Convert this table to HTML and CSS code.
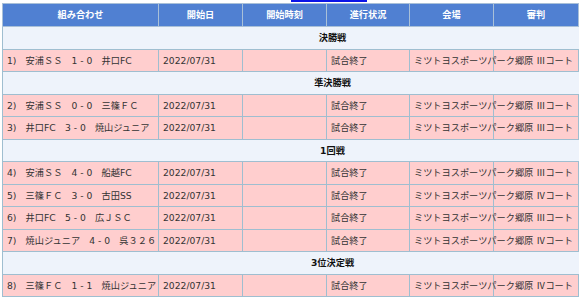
FILE: index.html
```html
<!DOCTYPE html>
<html lang="ja">
<head>
<meta charset="utf-8">
<title>試合結果</title>
<link rel="stylesheet" href="styles.css">
</head>
<body>
<div class="page">
  <div class="topline"></div>
  <table class="results">
    <colgroup>
      <col class="c-match"><col class="c-date"><col class="c-time"><col class="c-status"><col class="c-venue"><col class="c-ref"><col class="c-note">
    </colgroup>
    <thead>
      <tr><th>組み合わせ</th><th>開始日</th><th>開始時刻</th><th>進行状況</th><th>会場</th><th>審判</th><th></th></tr>
    </thead>
    <tbody>
      <tr class="round"><td colspan="7">決勝戦</td></tr>
      <tr class="game"><td>1)　安浦ＳＳ　1 - 0　井口FC</td><td>2022/07/31</td><td></td><td>試合終了</td><td>ミツトヨスポーツパーク郷原 <span class="num">Ⅲ</span>コート</td><td></td><td></td></tr>
      <tr class="round"><td colspan="7">準決勝戦</td></tr>
      <tr class="game"><td>2)　安浦ＳＳ　0 - 0　三篠ＦＣ</td><td>2022/07/31</td><td></td><td>試合終了</td><td>ミツトヨスポーツパーク郷原 <span class="num">Ⅲ</span>コート</td><td></td><td></td></tr>
      <tr class="game"><td>3)　井口FC　3 - 0　焼山ジュニア</td><td>2022/07/31</td><td></td><td>試合終了</td><td>ミツトヨスポーツパーク郷原 <span class="num">Ⅲ</span>コート</td><td></td><td></td></tr>
      <tr class="round"><td colspan="7">1回戦</td></tr>
      <tr class="game"><td>4)　安浦ＳＳ　4 - 0　船越FC</td><td>2022/07/31</td><td></td><td>試合終了</td><td>ミツトヨスポーツパーク郷原 <span class="num">Ⅲ</span>コート</td><td></td><td></td></tr>
      <tr class="game"><td>5)　三篠ＦＣ　3 - 0　古田SS</td><td>2022/07/31</td><td></td><td>試合終了</td><td>ミツトヨスポーツパーク郷原 <span class="num">Ⅳ</span>コート</td><td></td><td></td></tr>
      <tr class="game"><td>6)　井口FC　5 - 0　広ＪＳＣ</td><td>2022/07/31</td><td></td><td>試合終了</td><td>ミツトヨスポーツパーク郷原 <span class="num">Ⅲ</span>コート</td><td></td><td></td></tr>
      <tr class="game"><td>7)　焼山ジュニア　4 - 0　呉３２６</td><td>2022/07/31</td><td></td><td>試合終了</td><td>ミツトヨスポーツパーク郷原 <span class="num">Ⅳ</span>コート</td><td></td><td></td></tr>
      <tr class="round"><td colspan="7">3位決定戦</td></tr>
      <tr class="game"><td>8)　三篠ＦＣ　1 - 1　焼山ジュニア</td><td>2022/07/31</td><td></td><td>試合終了</td><td>ミツトヨスポーツパーク郷原 <span class="num">Ⅳ</span>コート</td><td></td><td></td></tr>
    </tbody>
  </table>
</div>
</body>
</html>
```

FILE: styles.css
```css
html, body {
  margin: 0;
  padding: 0;
  background: #ffffff;
}

.page {
  overflow: hidden;
  width: 579px;
  height: 299px;
  font-family: "DejaVu Sans", "Noto Sans CJK JP", sans-serif;
  font-size: 9.2px;
  color: #333333;
}

.topline {
  height: 2px;
  width: 76px;
  margin-left: 291px;
  background: #0a14e6;
}

.results {
  margin-left: 2px;
  margin-top: 0.5px;
  border-collapse: collapse;
  table-layout: fixed;
  width: 660px;
}

.c-match { width: 156px; }
.c-date { width: 84px; }
.c-time { width: 84px; }
.c-status { width: 83px; }
.c-venue { width: 84px; }
.c-ref { width: 85px; }
.c-note { width: 84px; }

.results th,
.results td {
  border: 1px solid #9fbed0;
  padding: 4px 4px;
  line-height: 13.5px;
  white-space: nowrap;
  text-align: left;
  vertical-align: middle;
}

.results th {
  background: #5080d2;
  color: #ffffff;
  font-weight: bold;
  text-align: center;
  border-color: #a9c0d8;
  padding-top: 4.5px;
  padding-bottom: 4.5px;
}

.round td {
  background: #eef3fb;
  color: #111111;
  font-weight: bold;
  text-align: center;
}

.game td {
  background: #ffcece;
}

.num {
  font-family: "Noto Sans CJK JP", sans-serif;
}
```
